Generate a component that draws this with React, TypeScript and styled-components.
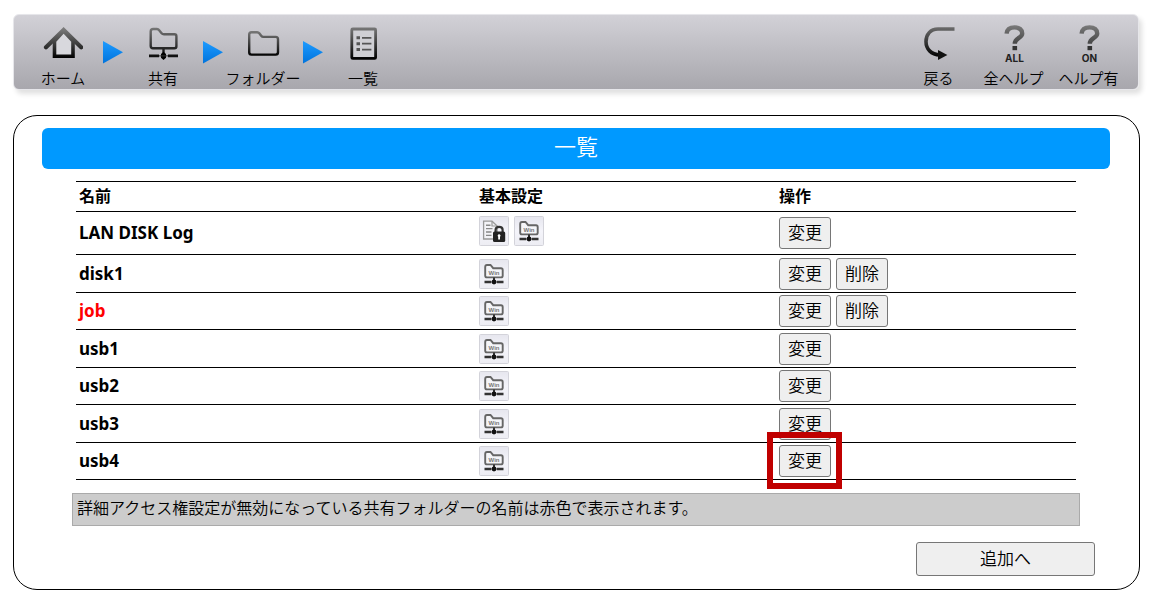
import React from "react";
import styled, { createGlobalStyle } from "styled-components";

const GlobalStyle = createGlobalStyle`
  * { box-sizing: border-box; }
  body {
    margin: 0;
    background: #fff;
    color: #000;
    font-family: "Noto Sans", "Noto Sans CJK JP", sans-serif;
    font-size: 16px;
    line-height: 24px;
  }
  button { font-family: inherit; color: inherit; }
`;

const jpFont = `"Noto Sans CJK JP", sans-serif`;

const Page = styled.div`
  padding: 14px 15px 12px 13px;
`;

const Header = styled.header`
  display: flex;
  justify-content: space-between;
  height: 76px;
  margin-right: 1px;
  padding: 9px 12px 0 9px;
  border: 1px solid #e6e6ea;
  border-radius: 6px;
  background: linear-gradient(#d2d1d7, #bdbcc2 50%, #a8a7ad);
  box-shadow: 3px 4px 5px rgba(0, 0, 0, 0.12);
`;

const Trail = styled.nav`
  display: flex;
`;

const NavItem = styled.a<{ $width: number }>`
  display: flex;
  flex-direction: column;
  align-items: center;
  width: ${(p) => p.$width}px;
  color: #000;
  font-family: ${jpFont};
  font-size: 15px;
  font-weight: 350;
  line-height: 24px;
  text-decoration: none;
  white-space: nowrap;

  svg { display: block; flex: none; }
`;

const Arrow = styled.svg`
  display: block;
  margin-top: 16px;
`;

const Panel = styled.main`
  margin-top: 25px;
  padding: 12px 29px 13px 28px;
  border: 1px solid #000;
  border-radius: 24px;
`;

const Title = styled.h1`
  margin: 0;
  height: 41px;
  border-radius: 6px;
  background: #0099ff;
  color: #fff;
  font-family: ${jpFont};
  font-size: 22px;
  font-weight: 350;
  line-height: 34px;
  text-align: center;
`;

const Content = styled.div`
  padding: 12px 30px 0;
`;

const FolderTable = styled.table`
  width: calc(100% - 8px);
  margin: 0 4px;
  border-collapse: separate;
  border-spacing: 0;
  border-top: 1px solid #000;
  table-layout: fixed;
`;

const HeadCell = styled.th<{ $width?: string }>`
  width: ${(p) => p.$width ?? "auto"};
  height: 30px;
  padding: 0 3px 4px;
  border-bottom: 1px solid #000;
  font-family: ${jpFont};
  font-weight: 700;
  text-align: left;
`;

const Row = styled.tr<{ $tall?: boolean }>`
  height: ${(p) => (p.$tall ? 43 : 38)}px;

  &:nth-child(odd) {
    height: ${(p) => (p.$tall ? 43 : 37)}px;
  }

  td, th {
    padding: 0 3px;
    border-bottom: 1px solid #000;
    vertical-align: middle;
  }
`;

const NameCell = styled.th<{ $alert?: boolean }>`
  color: ${(p) => (p.$alert ? "#f00" : "#000")};
  font-size: 17px;
  font-weight: 700;
  text-align: left;
`;

const IconList = styled.div<{ $raised?: boolean }>`
  display: flex;
  gap: 5px;
  padding-bottom: ${(p) => (p.$raised ? 5 : 0)}px;

  svg { display: block; }
`;

const Actions = styled.div`
  display: flex;
  gap: 5px;
`;

const Highlight = styled.div`
  position: relative;

  &::after {
    content: "";
    position: absolute;
    inset: -13px -11px -12px -12px;
    border: 6px solid #c00000;
    pointer-events: none;
  }
`;

const PushButton = styled.button`
  display: block;
  height: 32px;
  padding: 0 8px 2px;
  border: 1px solid #767676;
  border-radius: 3px;
  background: #efefef;
  font-family: ${jpFont};
  font-size: 17px;
  font-weight: 350;
  line-height: 28px;
`;

const AddButton = styled(PushButton)`
  width: 179px;
  height: 34px;
`;

const Note = styled.p`
  height: 33px;
  margin: 13px 0 16px;
  padding: 0 4px;
  border: 1px solid #aaa;
  background: #ccc;
  font-family: ${jpFont};
  font-weight: 350;
  line-height: 26px;
`;

const Footer = styled.div`
  display: flex;
  justify-content: flex-end;
  margin-right: 15px;
`;

const InkGradient = ({ id, y1, y2 }: { id: string; y1: number; y2: number }) => (
  <linearGradient id={id} gradientUnits="userSpaceOnUse" x1="0" y1={y1} x2="0" y2={y2}>
    <stop offset="0" stopColor="#7d7d7d" />
    <stop offset="0.55" stopColor="#3a3a3a" />
    <stop offset="1" stopColor="#000" />
  </linearGradient>
);

const HomeIcon = () => (
  <svg width="40" height="42" viewBox="0 0 40 42" fill="none" stroke="url(#homeInk)" aria-hidden="true">
    <defs><InkGradient id="homeInk" y1={4} y2={34} /></defs>
    <path d="M11.5 17V32.2H30V17L20.6 7Z" fill="#d8d8dd" strokeWidth="3.6" />
    <path d="M3 23.3L20.6 6L38.2 23.3" strokeWidth="4.2" strokeLinecap="round" />
  </svg>
);

const ShareIcon = () => (
  <svg width="40" height="42" viewBox="0 0 40 42" fill="none" stroke="url(#shareInk)" aria-hidden="true">
    <defs><InkGradient id="shareInk" y1={2} y2={34} /></defs>
    <path d="M7.7 7.5Q7.7 5 10.2 5H14Q15.3 5 16 6L18.6 9.2Q19.4 10.2 21 10.2H31.5Q33.4 10.2 33.4 12.2V22.3Q33.4 24.3 31.4 24.3H9.9Q7.7 24.3 7.7 22.1Z" strokeWidth="2.4" />
    <path d="M20.5 25V30" strokeWidth="2.4" />
    <path d="M6 31.9H16M25 31.9H35" stroke="#111" strokeWidth="2.6" />
    <path d="M20.5 27.8L23 30V33.8L20.5 36L18 33.8V30Z" fill="#000" stroke="none" />
    <path d="M16 31.9H25" stroke="#333" strokeWidth="1" />
  </svg>
);

const FolderIcon = () => (
  <svg width="40" height="42" viewBox="0 0 40 42" fill="none" stroke="url(#folderInk)" aria-hidden="true">
    <defs><InkGradient id="folderInk" y1={6} y2={32} /></defs>
    <path d="M6.2 10.5Q6.2 8.2 8.5 8.2H14.2Q15.5 8.2 16.3 9.3L18.2 11.8Q19 12.9 20.5 12.9H32.7Q35 12.9 35 15.2V28.3Q35 30.6 32.7 30.6H8.5Q6.2 30.6 6.2 28.3Z" strokeWidth="2.4" />
  </svg>
);

const ListIcon = () => (
  <svg width="40" height="42" viewBox="0 0 40 42" fill="none" stroke="url(#listInk)" aria-hidden="true">
    <defs><InkGradient id="listInk" y1={2} y2={35} /></defs>
    <rect x="8.8" y="5" width="23.8" height="29.4" rx="1" fill="#cfcfd4" strokeWidth="2.8" />
    <g stroke="#555">
      <path d="M13.5 13.8H17M13.5 19.7H17M13.5 25.6H17" strokeWidth="3" />
      <path d="M19 13.8H28.4M19 19.7H28.4M19 25.6H28.4" strokeWidth="1.8" />
    </g>
  </svg>
);

const BackIcon = () => (
  <svg width="40" height="42" viewBox="0 0 40 42" fill="none" stroke="url(#backInk)" aria-hidden="true">
    <defs><InkGradient id="backInk" y1={-2} y2={33} /></defs>
    <path d="M35.5 5H19C11.5 5 7 10.5 7 17.5C7 25 12 30.5 21 31" strokeWidth="3.6" />
    <path d="M19 26L28.4 31L19 36Z" fill="#111" stroke="none" />
  </svg>
);

const HelpIcon = ({ id, caption }: { id: string; caption: string }) => (
  <svg width="40" height="42" viewBox="0 0 40 42" aria-hidden="true">
    <defs><InkGradient id={id} y1={0} y2={44} /></defs>
    <path
      d="M12.6 9.6C13 5.6 16 3.4 20.6 3.4C25.4 3.4 28.2 5.8 28.2 9.4C28.2 14.2 20.8 13.6 20.8 19.8"
      fill="none"
      stroke={`url(#${id})`}
      strokeWidth="4.4"
    />
    <rect x="18.5" y="22" width="4.6" height="4.2" fill="#333" />
    <text x="20.5" y="37.5" textAnchor="middle" fontFamily="Inter, sans-serif" fontWeight="700" fontSize="10" fill="#222">{caption}</text>
  </svg>
);

const TrailArrow = () => (
  <Arrow width="20" height="24" viewBox="0 0 20 24" aria-hidden="true">
    <defs>
      <linearGradient id="arrowBlue" x1="0" y1="0" x2="0" y2="1">
        <stop offset="0" stopColor="#1e9bff" />
        <stop offset="1" stopColor="#0073dc" />
      </linearGradient>
    </defs>
    <path d="M0 1L20 12.3L0 23.6Z" fill="url(#arrowBlue)" />
  </Arrow>
);

const Tile = () => (
  <>
    <defs>
      <linearGradient id="tileFill" x1="0" y1="0" x2="0" y2="1">
        <stop offset="0" stopColor="#e6e6ee" />
        <stop offset="0.5" stopColor="#f4f4fa" />
        <stop offset="1" stopColor="#ededf3" />
      </linearGradient>
    </defs>
    <rect x="0.5" y="0.5" width="29" height="29" rx="1" fill="url(#tileFill)" stroke="#d3d3da" />
  </>
);

const WinShareIcon = () => (
  <svg width="30" height="30" viewBox="0 0 30 30" role="img" aria-label="Windows共有">
    <Tile />
    <path d="M6.2 8Q6.2 6 8 6H11.5L14.2 9.2H22Q23.7 9.2 23.7 11V16.8Q23.7 18.4 22 18.4H8Q6.2 18.4 6.2 16.8Z" fill="#f5f5f8" stroke="#666" strokeWidth="1.9" />
    <text x="15" y="16" textAnchor="middle" fontFamily="Liberation Sans, sans-serif" fontWeight="700" fontSize="6" fill="#777">Win</text>
    <path d="M15 18.5V23" stroke="#333" strokeWidth="2" />
    <path d="M5.5 23H12.2M17.8 23H24.5" stroke="#333" strokeWidth="2.6" />
    <path d="M12 23H18" stroke="#777" strokeWidth="1" />
    <circle cx="15" cy="23" r="2.4" fill="#111" />
  </svg>
);

const ReadOnlyIcon = () => (
  <svg width="30" height="30" viewBox="0 0 30 30" role="img" aria-label="読み取り専用">
    <Tile />
    <path d="M4.6 5.2H13L18.2 10V23H4.6Z" fill="#f3f3f7" stroke="#999" strokeWidth="1.3" />
    <path d="M13 5.2V10H18.2" fill="none" stroke="#999" strokeWidth="1.2" />
    <path d="M7 9.2H11.5M7 12.6H13.5M7 16H12.5M7 19.4H12.5" stroke="#888" strokeWidth="1.4" />
    <path d="M16.6 17V13.8Q16.6 10.8 20.1 10.8Q23.6 10.8 23.6 13.8V17" fill="none" stroke="#333" strokeWidth="2.2" />
    <rect x="14" y="15.6" width="12.2" height="10.4" rx="1.5" fill="#222" />
    <path d="M20.1 18.2A1.4 1.4 0 0 1 21 20.7V23.4H19.2V20.7A1.4 1.4 0 0 1 20.1 18.2Z" fill="#fff" />
  </svg>
);

type Folder = {
  name: string;
  readOnly?: boolean;
  alert?: boolean;
  removable?: boolean;
  highlighted?: boolean;
};

const folders: Folder[] = [
  { name: "LAN DISK Log", readOnly: true },
  { name: "disk1", removable: true },
  { name: "job", alert: true, removable: true },
  { name: "usb1" },
  { name: "usb2" },
  { name: "usb3" },
  { name: "usb4", highlighted: true },
];

const FolderRow = ({ folder }: { folder: Folder }) => {
  const edit = <PushButton type="button">変更</PushButton>;
  return (
    <Row $tall={folder.readOnly}>
      <NameCell scope="row" $alert={folder.alert}>{folder.name}</NameCell>
      <td>
        <IconList $raised={folder.readOnly}>
          {folder.readOnly && <ReadOnlyIcon />}
          <WinShareIcon />
        </IconList>
      </td>
      <td>
        <Actions>
          {folder.highlighted ? <Highlight>{edit}</Highlight> : edit}
          {folder.removable && <PushButton type="button">削除</PushButton>}
        </Actions>
      </td>
    </Row>
  );
};

export default function App() {
  return (
    <Page>
      <GlobalStyle />
      <Header>
        <Trail>
          <NavItem href="#home" $width={80}><HomeIcon />ホーム</NavItem>
          <TrailArrow />
          <NavItem href="#share" $width={80}><ShareIcon />共有</NavItem>
          <TrailArrow />
          <NavItem href="#folder" $width={80}><FolderIcon />フォルダー</NavItem>
          <TrailArrow />
          <NavItem href="#list" $width={80}><ListIcon />一覧</NavItem>
        </Trail>
        <Trail>
          <NavItem href="#back" $width={75}><BackIcon />戻る</NavItem>
          <NavItem href="#help-all" $width={75}><HelpIcon id="helpAllInk" caption="ALL" />全ヘルプ</NavItem>
          <NavItem href="#help-on" $width={75}><HelpIcon id="helpOnInk" caption="ON" />ヘルプ有</NavItem>
        </Trail>
      </Header>
      <Panel>
        <Title>一覧</Title>
        <Content>
          <FolderTable>
            <thead>
              <tr>
                <HeadCell scope="col" $width="40%">名前</HeadCell>
                <HeadCell scope="col" $width="30%">基本設定</HeadCell>
                <HeadCell scope="col">操作</HeadCell>
              </tr>
            </thead>
            <tbody>
              {folders.map((folder) => (
                <FolderRow key={folder.name} folder={folder} />
              ))}
            </tbody>
          </FolderTable>
          <Note>詳細アクセス権設定が無効になっている共有フォルダーの名前は赤色で表示されます。</Note>
        </Content>
        <Footer>
          <AddButton type="button">追加へ</AddButton>
        </Footer>
      </Panel>
    </Page>
  );
}
